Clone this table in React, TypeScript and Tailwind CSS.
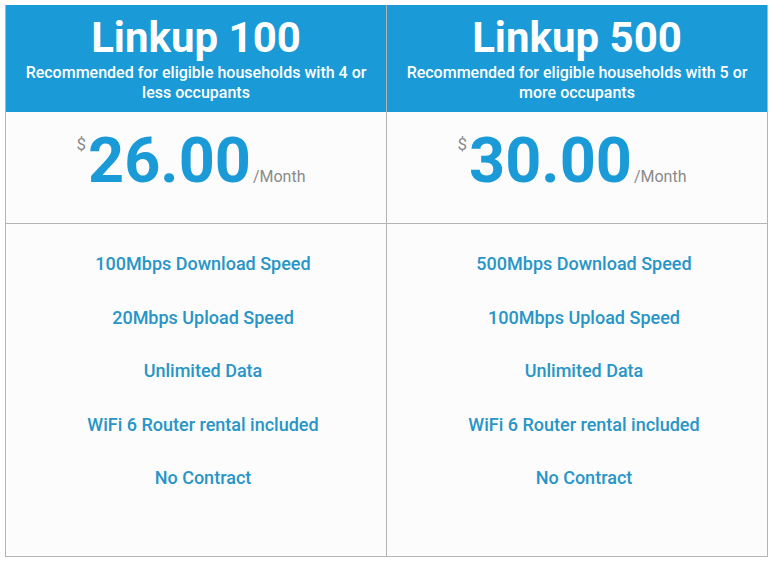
const plans = [
  {
    name: "Linkup 100",
    note: "Recommended for eligible households with 4 or less occupants",
    price: "26.00",
    features: ["100Mbps Download Speed", "20Mbps Upload Speed", "Unlimited Data", "WiFi 6 Router rental included", "No Contract"],
  },
  {
    name: "Linkup 500",
    note: "Recommended for eligible households with 5 or more occupants",
    price: "30.00",
    features: ["500Mbps Download Speed", "100Mbps Upload Speed", "Unlimited Data", "WiFi 6 Router rental included", "No Contract"],
  },
]

export default function App() {
  return (
    <div className="min-h-screen bg-white p-[5px]" style={{ fontFamily: "Roboto, 'Liberation Sans', sans-serif" }}>
      <div className="grid w-[763px] grid-cols-2 border-r border-b border-[#b4b4b4]">
        {plans.map((plan) => (
          <div key={plan.name} className="flex flex-col border-l border-[#b4b4b4]">
            <div className="flex h-[107px] flex-col items-center bg-[#1a9bd7] px-3 pt-[11px] text-center text-white">
              <h2 className="text-[42px] leading-[44px] font-bold">{plan.name}</h2>
              <p className="mt-[3px] text-[16px] leading-[20px] font-medium">{plan.note}</p>
            </div>
            <div className="flex h-[112px] items-start justify-center border-b border-[#b4b4b4] bg-[#fcfcfc] pt-[17px] pr-[10px]">
              <div className="flex items-baseline">
                <span className="mt-[7px] mr-[2px] self-start text-[17px] leading-[17px] text-[#8a8a8a]">$</span>
                <span className="text-[63px] leading-[63px] font-bold text-[#1a9bd7]">{plan.price}</span>
                <span className="ml-[2px] text-[16px] text-[#8a8a8a]">/Month</span>
              </div>
            </div>
            <div className="flex h-[332px] flex-col items-center bg-[#fcfcfc] pt-[28px] pl-[14px]">
              {plan.features.map((f) => (
                <p key={f} className="h-[53.5px] text-[18px] leading-[24px] font-medium text-[#2795c7]">
                  {f}
                </p>
              ))}
            </div>
          </div>
        ))}
      </div>
    </div>
  )
}
